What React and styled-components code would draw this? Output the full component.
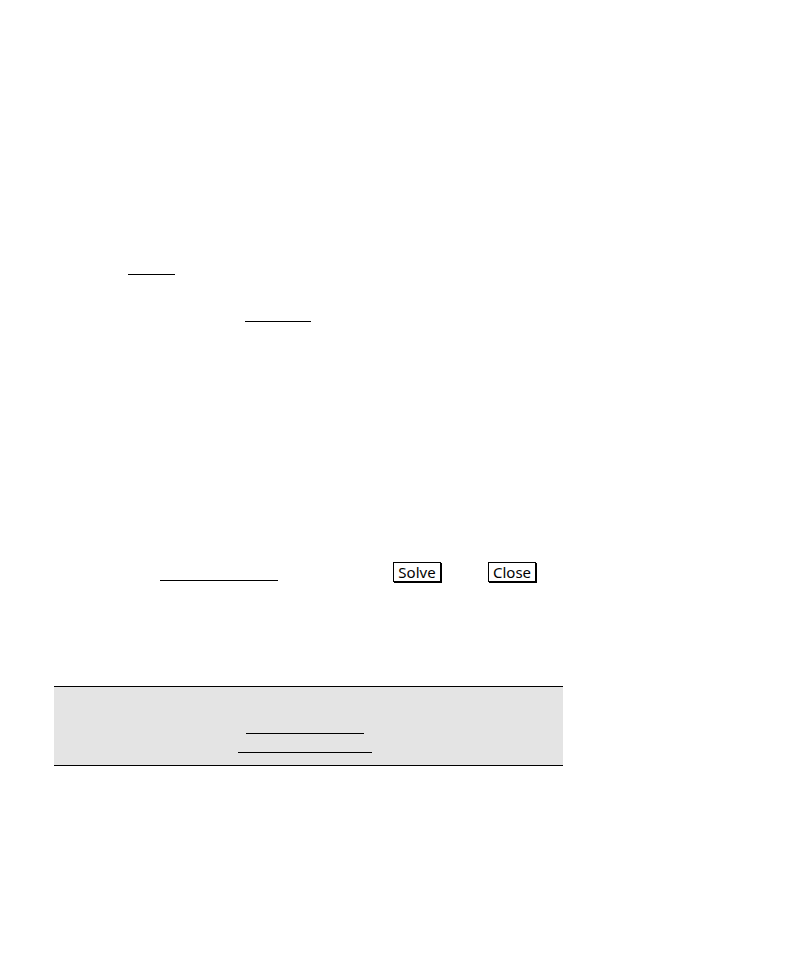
import React from 'react';
import styled, { createGlobalStyle } from 'styled-components';

const App = () => {
	return (
		<>
			<GlobalStyle />
			<Page>
				<Intro>
					<Row $indent={74}>
						<Underline $width={47} />
					</Row>
					<Row $indent={191}>
						<Underline $width={66} />
					</Row>
				</Intro>

				<Actions>
					<Underline $width={118} />
					<Buttons>
						<Button type='button'>Solve</Button>
						<Button type='button'>Close</Button>
					</Buttons>
				</Actions>

				<Note>
					<NoteRow $indent={192}>
						<Underline $width={118} />
					</NoteRow>
					<NoteRow $indent={184}>
						<Underline $width={134} />
					</NoteRow>
				</Note>
			</Page>
		</>
	);
};

const GlobalStyle = createGlobalStyle`
	* {
		box-sizing: border-box;
	}
	body {
		margin: 0;
		background: #fff;
		color: #000;
		font-family: 'Noto Sans', sans-serif;
	}
`;

const Page = styled.main`
	max-width: 563px;
	padding: 228px 0 48px 54px;
`;

const Intro = styled.section`
	display: flex;
	flex-direction: column;
`;

const Row = styled.div`
	display: flex;
	align-items: flex-end;
	height: 47px;
	padding-left: ${({ $indent }) => $indent}px;
`;

const Underline = styled.span`
	flex: none;
	width: ${({ $width }) => $width}px;
	border-bottom: 1px solid #000;
`;

const Actions = styled.section`
	display: flex;
	align-items: flex-end;
	gap: 115px;
	margin-top: 240px;
	padding: 0 0 1px 106px;
`;

const Buttons = styled.div`
	display: flex;
	gap: 47px;
	margin-bottom: -1px;
`;

const Button = styled.button`
	width: 48px;
	height: 20px;
	padding: 0;
	border: 1px solid #000;
	box-shadow: 1px 1px 0 #000;
	background: #fff;
	color: #000;
	font-family: inherit;
	font-size: 15px;
	line-height: 18px;
`;

const Note = styled.aside`
	margin-top: 104px;
	padding: 28px 0 12px;
	border: solid #000;
	border-width: 1px 0;
	background: #e4e4e4;
`;

const NoteRow = styled(Row)`
	height: 19px;
`;

export default App;
